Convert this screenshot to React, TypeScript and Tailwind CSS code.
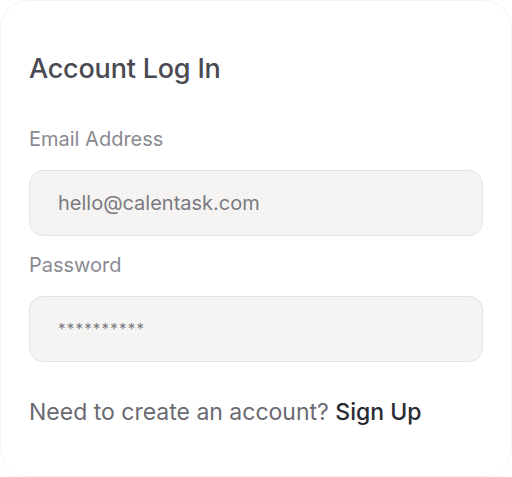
export default function App() {
  return (
    <div className="h-[477px] w-[512px] bg-white font-['Inter',sans-serif]">
      <div className="flex h-full w-full flex-col rounded-[28px] border border-[#f3f3f3] bg-white px-[28px] pt-[50px]">
        <h1 className="text-[27px] leading-[36px] font-medium tracking-[-0.2px] text-[#4a4a52]">
          Account Log In
        </h1>
        <label className="mt-[38px] text-[20px] leading-[28px] text-[#8a8a92]">Email Address</label>
        <div className="mt-[17px] flex h-[66px] items-center rounded-[14px] border border-[#e4e4e4] bg-[#f5f4f2] bg-[radial-gradient(#ebeae7_0.6px,transparent_0.6px)] bg-[length:5px_5px] pl-[28px] text-[20px] text-[#7a7a82]">
          hello@calentask.com
        </div>
        <label className="mt-[15px] text-[20px] leading-[28px] text-[#8a8a92]">Password</label>
        <div className="mt-[17px] flex h-[66px] items-center rounded-[14px] border border-[#e4e4e4] bg-[#f5f4f2] bg-[radial-gradient(#ebeae7_0.6px,transparent_0.6px)] bg-[length:5px_5px] pl-[28px] text-[15px] tracking-[1.2px] text-[#7a7a82]">
          **********
        </div>
        <p className="mt-[35px] text-[23px] leading-[30px] text-[#6a6a72]">
          Need to create an account? <span className="font-medium text-[#2a2a32]">Sign Up</span>
        </p>
      </div>
    </div>
  )
}
